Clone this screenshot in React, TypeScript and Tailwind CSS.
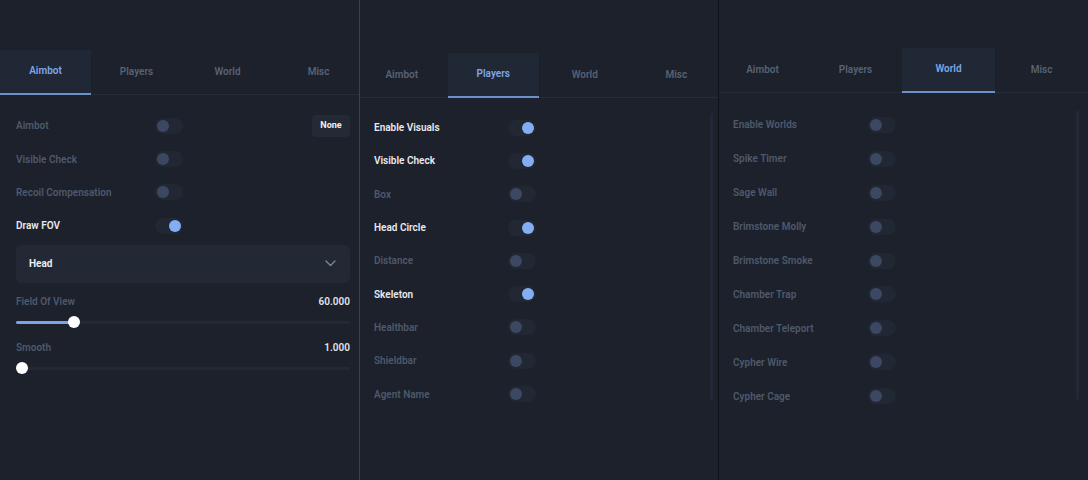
import React from "react";

type Row = { label: string; on: boolean };

const TABS = ["Aimbot", "Players", "World", "Misc"];

function Tabs({ active, width, shift }: { active: number; width: string; shift: string }) {
  return (
    <div className={`flex h-[45px] border-b border-[#262c38] ${shift}`}>
      {TABS.map((t, i) => (
        <div
          key={t}
          className={
            i === active
              ? `${width} shrink-0 -mb-px flex items-center justify-center bg-[#212835] border-b-2 border-[#6c90cb] pb-[2px] text-[10px] font-semibold text-[#7ea6e8]`
              : `${width} shrink-0 flex items-center justify-center pb-[2px] text-[10px] font-semibold text-[#586274]`
          }
        >
          {t}
        </div>
      ))}
    </div>
  );
}

function Toggle({ on }: { on: boolean }) {
  return (
    <div
      className={`flex h-4 w-7 items-center rounded-full bg-[#212733] px-[2px] ${on ? "justify-end" : "justify-start"}`}
    >
      <div className={`h-3 w-3 rounded-full ${on ? "bg-[#84aef4]" : "bg-[#3c4862]"}`} />
    </div>
  );
}

function ToggleRow({ row, labelW, rowH }: { row: Row; labelW: string; rowH: string }) {
  return (
    <div className={`flex ${rowH} items-center`}>
      <span
        className={`${labelW} shrink-0 text-[10px] font-semibold ${row.on ? "text-[#e8eaee]" : "text-[#4e596c]"}`}
      >
        {row.label}
      </span>
      <Toggle on={row.on} />
    </div>
  );
}

function Slider({ label, value, pct }: { label: string; value: string; pct: number }) {
  return (
    <div className="flex flex-col">
      <div className="flex items-center justify-between">
        <span className="text-[10px] font-semibold text-[#4e596c]">{label}</span>
        <span className="text-[10px] font-semibold text-[#e1e4ea]">{value}</span>
      </div>
      <div className="relative mt-[12px] h-[3px] rounded-full bg-[#222934]">
        <div className="h-full rounded-full bg-[#7aa4ea]" style={{ width: `${pct}%` }} />
        <div
          className="absolute top-1/2 h-3 w-3 -translate-x-1/2 -translate-y-1/2 rounded-full bg-white"
          style={{ left: `calc(${pct}% + 6px - ${pct * 0.12}px)` }}
        />
      </div>
    </div>
  );
}

function AimbotPanel() {
  const rows: Row[] = [
    { label: "Aimbot", on: false },
    { label: "Visible Check", on: false },
    { label: "Recoil Compensation", on: false },
    { label: "Draw FOV", on: true },
  ];
  return (
    <div className="relative w-[359px] shrink-0 overflow-hidden pt-[50px]">
      <Tabs active={0} width="w-[91px]" shift="" />
      <div className="pl-4 pr-[9px] pt-[14px]">
        {rows.map((r, i) => (
          <div key={r.label} className="flex items-center justify-between">
            <ToggleRow row={r} labelW="w-[139px]" rowH="h-[33.4px]" />
            {i === 0 && (
              <div className="flex h-[22px] w-[38px] items-center justify-center rounded bg-[#232a35] text-[9px] font-bold text-[#eef0f3]">
                None
              </div>
            )}
          </div>
        ))}
        <div className="mt-[2px] flex h-[38px] items-center justify-between rounded-md bg-[#222935] pl-[13px] pr-[14px]">
          <span className="text-[10px] font-bold text-[#eceef2]">Head</span>
          <svg width="11" height="7" viewBox="0 0 11 7" fill="none">
            <path d="M1 1l4.5 4.5L10 1" stroke="#7f8898" strokeWidth="1.3" strokeLinecap="round" strokeLinejoin="round" />
          </svg>
        </div>
        <div className="mt-[11px] flex flex-col gap-[16px]">
          <Slider label="Field Of View" value="60.000" pct={16.1} />
          <Slider label="Smooth" value="1.000" pct={0} />
        </div>
      </div>
    </div>
  );
}

function ListPanel({
  active,
  rows,
  padTop,
  tabW,
  shift,
  listPad,
  labelW,
  rowH,
  bar,
  className,
}: {
  active: number;
  rows: Row[];
  padTop: string;
  tabW: string;
  shift: string;
  listPad: string;
  labelW: string;
  rowH: string;
  bar: string;
  className: string;
}) {
  return (
    <div className={`relative overflow-hidden ${padTop} ${className}`}>
      <Tabs active={active} width={tabW} shift={shift} />
      <div className={`pl-[14px] ${listPad}`}>
        {rows.map((r) => (
          <ToggleRow key={r.label} row={r} labelW={labelW} rowH={rowH} />
        ))}
      </div>
      <div className={`absolute w-[3px] rounded-full bg-[#222935] ${bar}`} />
    </div>
  );
}

export default function App() {
  const players: Row[] = [
    { label: "Enable Visuals", on: true },
    { label: "Visible Check", on: true },
    { label: "Box", on: false },
    { label: "Head Circle", on: true },
    { label: "Distance", on: false },
    { label: "Skeleton", on: true },
    { label: "Healthbar", on: false },
    { label: "Shieldbar", on: false },
    { label: "Agent Name", on: false },
  ];
  const world: Row[] = [
    "Enable Worlds",
    "Spike Timer",
    "Sage Wall",
    "Brimstone Molly",
    "Brimstone Smoke",
    "Chamber Trap",
    "Chamber Teleport",
    "Cypher Wire",
    "Cypher Cage",
  ].map((label) => ({ label, on: false }));

  return (
    <div className="flex h-[480px] w-[1088px] overflow-hidden bg-[#1c212b] font-['Roboto','Liberation_Sans',sans-serif]">
      <AimbotPanel />
      <div className="w-px shrink-0 bg-[#3a404b]" />
      <ListPanel
        active={1}
        rows={players}
        padTop="pt-[53px]"
        tabW="w-[91.5px]"
        shift="-ml-[4px]"
        listPad="pt-[13px]"
        labelW="w-[134px]"
        rowH="h-[33.3px]"
        bar="left-[350px] top-[113px] h-[287px]"
        className="w-[358px] shrink-0"
      />
      <div className="w-px shrink-0 bg-[#0e1116]" />
      <ListPanel
        active={2}
        rows={world}
        padTop="pt-[48px]"
        tabW="w-[93px]"
        shift="-ml-[3px]"
        listPad="pt-[15px]"
        labelW="w-[135px]"
        rowH="h-[33.9px]"
        bar="left-[357px] top-[110px] h-[290px]"
        className="flex-1"
      />
    </div>
  );
}
